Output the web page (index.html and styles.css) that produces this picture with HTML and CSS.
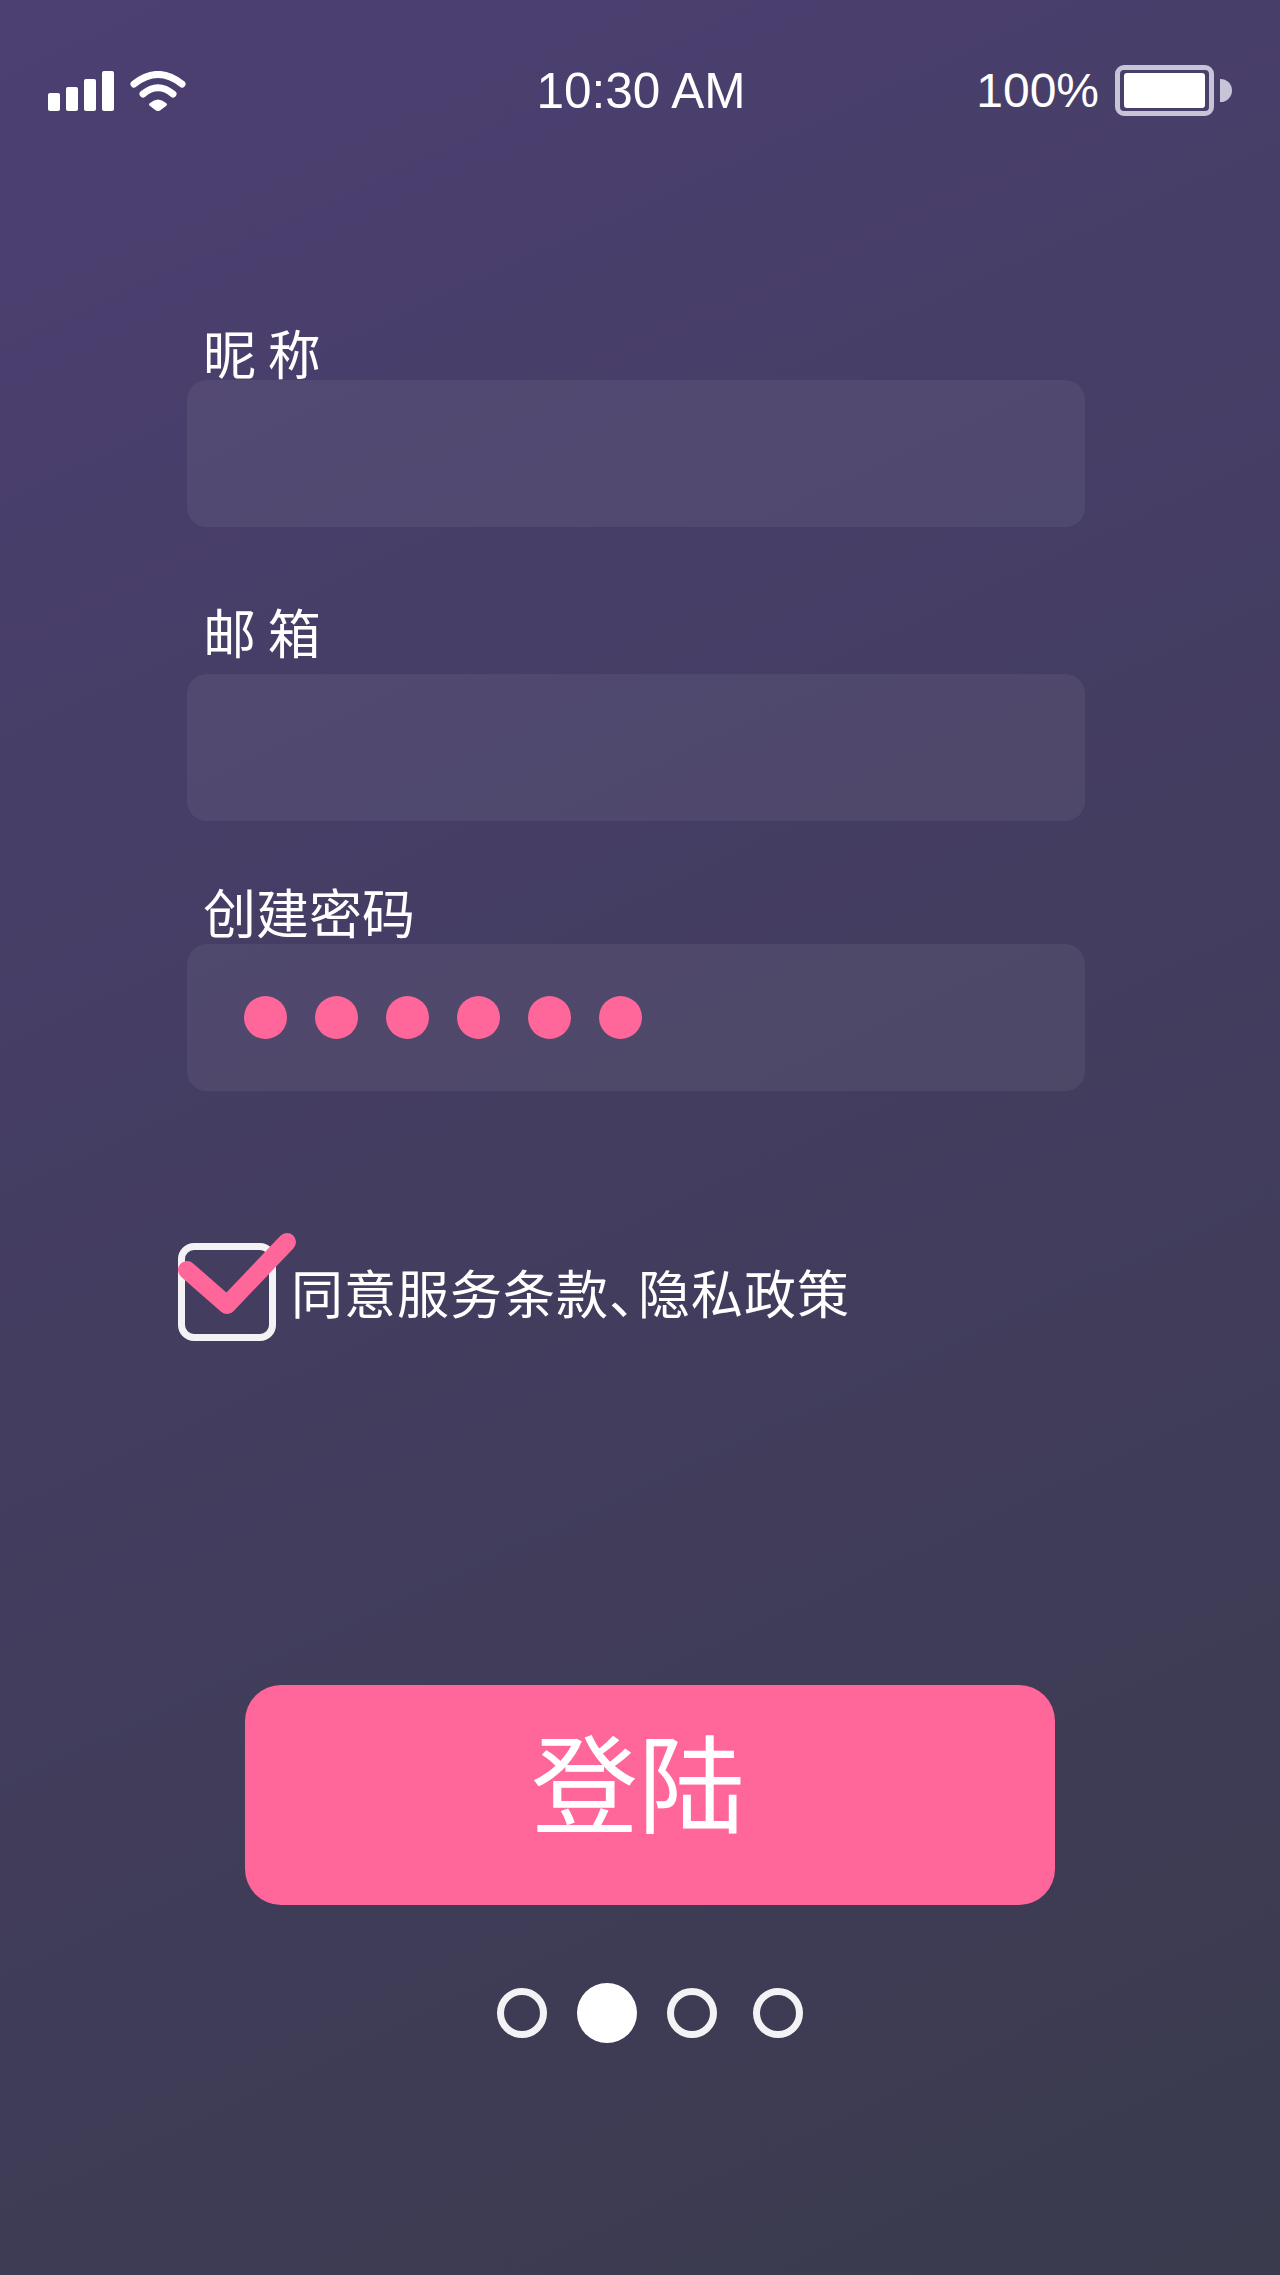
FILE: index.html
```html
<!DOCTYPE html>
<html>
<head>
<meta charset="UTF-8">
<meta name="viewport" content="width=1280">
<title>注册</title>
<link rel="stylesheet" href="styles.css">
</head>
<body>
<div class="screen">

<div class="status">
  <div class="status-left">
    <div class="signal">
      <span class="bar bar1"></span>
      <span class="bar bar2"></span>
      <span class="bar bar3"></span>
      <span class="bar bar4"></span>
    </div>
    <svg class="wifi" width="56" height="40" viewBox="0 0 56 40">
      <path d="M4 13Q28 -6 52 13" fill="none" stroke="#fff" stroke-width="7" stroke-linecap="round"/>
      <path d="M13 23Q28 10.500 43 23" fill="none" stroke="#fff" stroke-width="7" stroke-linecap="round"/>
      <path d="M20 32Q28 25 36 32Q38 33.500 36 35L30 39.500Q28 40.500 26 39.500L20 35Q18 33.500 20 32Z" fill="#fff"/>
    </svg>
  </div>
  <div class="time">10:30 AM</div>
  <div class="status-right">
    <span class="percent">100%</span>
    <div class="battery"><div class="battery-fill"></div></div>
    <div class="battery-cap"></div>
  </div>
</div>

<form class="form">
  <div class="field field-name">
    <label class="label">昵 称</label>
    <div class="input"></div>
  </div>
  <div class="field field-mail">
    <label class="label label-mail">邮 箱</label>
    <div class="input"></div>
  </div>
  <div class="field field-pass">
    <label class="label label-pass">创建密码</label>
    <div class="input input-pass">
      <span class="pw-dot"></span>
      <span class="pw-dot"></span>
      <span class="pw-dot"></span>
      <span class="pw-dot"></span>
      <span class="pw-dot"></span>
      <span class="pw-dot"></span>
    </div>
  </div>

  <div class="agree">
    <div class="checkbox">
      <svg class="check" width="120" height="90" viewBox="0 0 120 90">
        <path d="M9 42L49 77L109 14" fill="none" stroke="#ff6699" stroke-width="18" stroke-linecap="round" stroke-linejoin="round"/>
      </svg>
    </div>
    <div class="agree-text">同意服务条款<span class="comma">、</span>隐私政策</div>
  </div>
</form>

<div class="login">登陆</div>

<div class="pager">
  <span class="page"></span>
  <span class="page page-on"></span>
  <span class="page"></span>
  <span class="page page-last"></span>
</div>

</div>
</body>
</html>
```

FILE: styles.css
```css
html, body { margin: 0; padding: 0; }
body {
    font-family: "Liberation Sans", "Noto Sans CJK SC", sans-serif;
    color: #fff;
}
.screen {
    width: 1280px;
    height: 2275px;
    overflow: hidden;
    background: linear-gradient(155deg, #4c3f72 0%, #3a3b4d 100%);
}

/* status bar */
.status {
    display: grid;
    grid-template-columns: 1fr auto 1fr;
    align-items: center;
    height: 51px;
    padding: 65px 48px 0 48px;
}
.status-left { display: flex; align-items: center; }
.signal { display: flex; align-items: flex-end; gap: 6px; height: 40px; margin-top: 1px; }
.bar { display: block; width: 12px; background: #fff; border-radius: 2px; }
.bar1 { height: 18px; }
.bar2 { height: 24px; }
.bar3 { height: 32px; }
.bar4 { height: 40px; }
.wifi { margin-left: 16px; }
.time { font-size: 49.5px; line-height: 51px; margin-left: 2px; }
.status-right { display: flex; align-items: center; justify-content: flex-end; }
.percent { font-size: 48px; line-height: 51px; margin-right: 16px; }
.battery {
    box-sizing: border-box;
    width: 99px;
    height: 51px;
    padding: 3px 4px;
    border: 5px solid #c8c4d8;
    border-radius: 9px;
}
.battery-fill { height: 100%; background: #fff; border-radius: 3px; }
.battery-cap {
    width: 12px;
    height: 23px;
    margin-left: 6px;
    background: #c8c4d8;
    border-radius: 0 12px 12px 0;
}

/* form */
.form { padding: 0 195px 0 187px; }
.field { display: flex; flex-direction: column; }
.field-name { margin-top: 204px; }
.field-mail { margin-top: 87px; }
.field-pass { margin-top: 63px; }
.label {
    font-family: "Noto Sans CJK SC", sans-serif;
    font-size: 53px;
    line-height: 60px;
    height: 60px;
    padding-left: 16px;
    position: relative;
    top: 2px;
}
/* labels don't sit the same distance above their boxes */
.label-mail { top: -13px; }
.label-pass { top: -3px; }
.input {
    height: 147px;
    background: rgba(255, 255, 255, 0.06);
    border-radius: 20px;
}
.input-pass { display: flex; align-items: center; gap: 28px; padding-left: 57px; }
.pw-dot { width: 43px; height: 43px; border-radius: 50%; background: #ff6699; }

.agree { display: flex; align-items: center; margin: 152px 0 0 -9px; }
.checkbox {
    position: relative;
    box-sizing: border-box;
    width: 98px;
    height: 98px;
    border: 7px solid #f3f3f5;
    border-radius: 16px;
}
.check { position: absolute; left: -7px; top: -22px; }
.agree-text {
    font-family: "Noto Sans CJK SC", sans-serif;
    font-size: 52px;
    line-height: 60px;
    letter-spacing: 1px;
    margin-left: 15px;
}
.comma { letter-spacing: -23px; }

/* button + pager */
.login {
    box-sizing: border-box;
    width: 810px;
    height: 220px;
    margin: 344px 0 0 245px;
    padding-right: 24px;
    background: #ff6699;
    border-radius: 36px;
    font-family: "Noto Sans CJK SC", sans-serif;
    font-size: 107px;
    line-height: 188px;
    text-align: center;
}
.pager { display: flex; align-items: center; margin: 78px 0 0 497px; }
.page {
    box-sizing: border-box;
    width: 50px;
    height: 50px;
    margin-right: 30px;
    border: 7px solid #f3f3f5;
    border-radius: 50%;
}
.page-on { width: 60px; height: 60px; background: #fff; border: 0; }
.page:nth-child(3) { margin-right: 36px; }
```
